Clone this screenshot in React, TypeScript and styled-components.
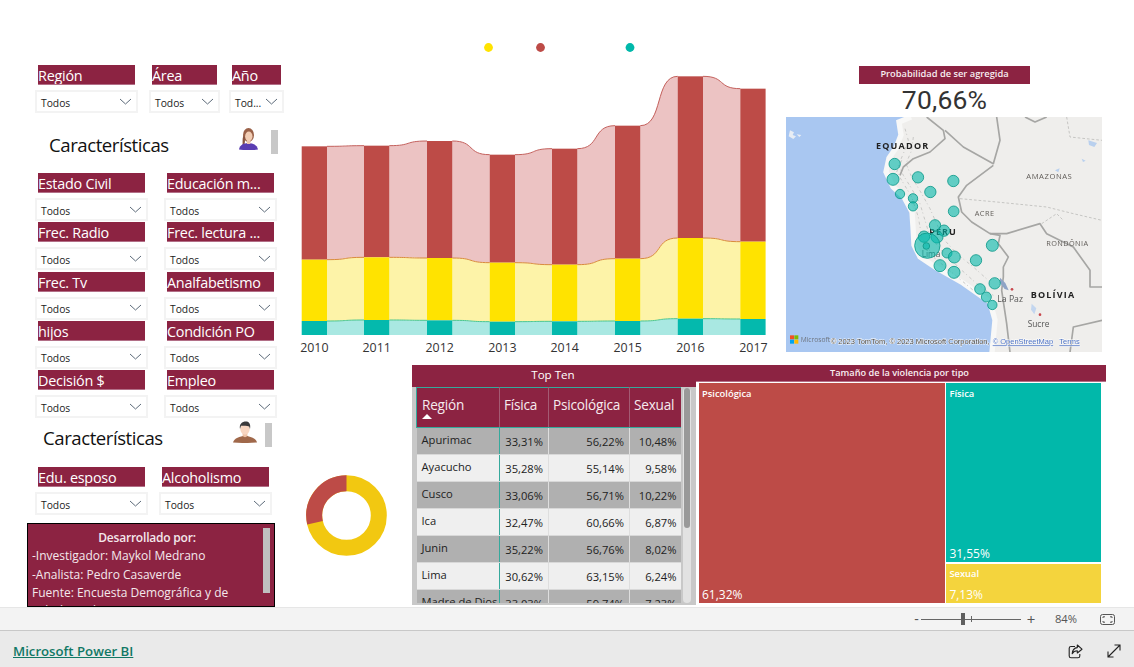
import React from "react";
import styled, { createGlobalStyle } from "styled-components";

const UI = `"Open Sans", "Noto Sans", sans-serif`;
const WINE = "#8c2342";

const Global = createGlobalStyle`
  html, body { margin: 0; padding: 0; background: #fff; }
  body { font-family: ${UI}; overflow: hidden; }
  * { box-sizing: border-box; }
`;

const Page = styled.div`
  width: 1134px;
  height: 667px;
  display: flex;
  flex-direction: column;
  overflow: hidden;
`;
const Canvas = styled.main`
  height: 607px;
  display: flex;
  overflow: hidden;
  background: #fff;
`;

/* ---------- left panel ---------- */
const LeftPanel = styled.aside`
  width: 298px;
  flex: none;
  padding: 65px 0 0 35px;
`;
const SlicerRow = styled.div<{ $gap: number; $ml?: number }>`
  display: flex;
  gap: ${(p) => p.$gap}px;
  margin-left: ${(p) => p.$ml ?? 0}px;
`;
const SlicerGrid = styled.div`
  display: grid;
  grid-template-columns: 113px 113px;
  column-gap: 16px;
  row-gap: 1.25px;
`;
const SlicerBox = styled.div<{ $w: number }>`
  width: ${(p) => p.$w}px;
`;
const SlicerTitle = styled.div`
  height: 20px;
  margin: 0 3px 5px;
  background: ${WINE};
  border-bottom: 1px solid #b26f87;
  color: #fff;
  font-size: 14.4px;
  line-height: 21px;
  letter-spacing: -0.25px;
  white-space: nowrap;
  overflow: hidden;
`;
const Dropdown = styled.div`
  height: 23px;
  border: 2px solid #f3f3f3;
  background: #fff;
  display: flex;
  align-items: center;
  justify-content: space-between;
  padding: 2px 4px 0 4px;
  font-size: 10.3px;
  color: #222;
`;
const ChevronSvg = styled.svg`
  margin-top: -3px;
  flex: none;
`;
const Chevron = () => (
  <ChevronSvg width="13" height="7" viewBox="0 0 13 7">
    <polyline points="1,1 6.5,6 12,1" fill="none" stroke="#5d6b7a" strokeWidth="1" />
  </ChevronSvg>
);
function Slicer({ title, w }: { title: string; w: number }) {
  const short = w < 60 ? "Tod..." : "Todos";
  return (
    <SlicerBox $w={w}>
      <SlicerTitle>{title}</SlicerTitle>
      <Dropdown>
        <span>{short}</span>
        <Chevron />
      </Dropdown>
    </SlicerBox>
  );
}
const SectionHead = styled.div<{ $h: number; $indent: number; $avatarW: number; $top: number }>`
  height: ${(p) => p.$h}px;
  width: ${(p) => p.$avatarW}px;
  margin-left: ${(p) => p.$indent}px;
  padding-top: ${(p) => p.$top}px;
  display: flex;
  align-items: flex-start;
`;
const SectionText = styled.h2`
  margin: 0;
  flex: 1;
  font-size: 18.6px;
  line-height: 26px;
  font-weight: 400;
  letter-spacing: -0.45px;
  color: #111;
  white-space: nowrap;
`;
const AvatarSlot = styled.div<{ $mt: number; $mr: number }>`
  margin-top: ${(p) => p.$mt}px;
  margin-right: ${(p) => p.$mr}px;
  line-height: 0;
`;
const MiniScroll = styled.div<{ $mt: number }>`
  width: 7px;
  height: 24px;
  background: #c8c8c8;
  margin-top: ${(p) => p.$mt}px;
`;
const Woman = () => (
  <svg width="20" height="22" viewBox="0 0 20 22">
    <ellipse cx="10.5" cy="7" rx="5.5" ry="7" fill="#9a6148" />
    <path d="M5.2 8 C4 12 5 15 4.4 18 L6.4 18 C7 15 7 12 7 9 Z" fill="#8a5540" />
    <path d="M1 21.5 C1.5 17 6 15 10.5 15 C15 15 19 17 20 21.5 C14 22.4 6 22.4 1 21.5 Z" fill="#5a3db2" />
    <rect x="8.8" y="11" width="3.6" height="5" fill="#eec5aa" />
    <ellipse cx="10.8" cy="8.4" rx="3.7" ry="4.8" fill="#f2cdb4" />
  </svg>
);
const Man = () => (
  <svg width="24" height="22" viewBox="0 0 24 22">
    <path d="M0 21.5 C1 17 7 15.5 12 14.5 C17 15.5 23 17 24 21.5 C16 22.2 8 22.2 0 21.5 Z" fill="#a0684a" />
    <path d="M9.6 10 H14.4 V15 C13 16.5 11 16.5 9.6 15 Z" fill="#eec2a6" />
    <ellipse cx="12" cy="8" rx="4.7" ry="5.8" fill="#f8d6c1" />
    <path d="M7 8 C6 3 9 0.5 13 0.5 C16 0.5 18 3 17 8 L16.2 5.5 C14 4.6 11 5 8 4.8 Z" fill="#3a3a3c" />
  </svg>
);
const DevBox = styled.section`
  width: 248px;
  height: 84px;
  margin: 8px 0 0 -8px;
  position: relative;
  overflow: hidden;
  background: ${WINE};
  border: 1px solid #000;
  padding: 5px 18px 0 4px;
  color: #f4e8ec;
  font-size: 12px;
  line-height: 18.3px;
`;
const DevTitle = styled.div`
  text-align: center;
  font-weight: 600;
  margin-left: 6px;
  letter-spacing: -0.2px;
`;
const DevLine = styled.div`
  white-space: nowrap;
`;
const DevScroll = styled.div`
  position: absolute;
  right: 4px;
  top: 4px;
  width: 7px;
  height: 65px;
  background: #c0c0c0;
`;

/* ---------- center / right ---------- */
const RightArea = styled.div`
  flex: 1;
  display: flex;
  flex-direction: column;
`;
const TopRow = styled.div`
  height: 365px;
  display: flex;
  gap: 6px;
  flex: none;
`;
const ChartSvg = styled.svg`
  display: block;
  flex: none;
`;
const MapCol = styled.section`
  width: 316px;
  padding-top: 66px;
  display: flex;
  flex-direction: column;
  align-items: center;
`;
const MapTitle = styled.div`
  width: 171px;
  height: 18px;
  background: ${WINE};
  color: #f8eef1;
  font-size: 9.3px;
  font-weight: 600;
  line-height: 16px;
  text-align: center;
  margin-left: 1px;
`;
const Kpi = styled.div`
  height: 33px;
  font-family: "Roboto", sans-serif;
  font-size: 26.5px;
  line-height: 32px;
  letter-spacing: 0.2px;
  color: #333;
  margin-left: 1px;
`;
const MapSvg = styled.svg`
  display: block;
  filter: blur(0.35px);
`;
const BottomRow = styled.div`
  flex: 1;
  display: flex;
`;
const DonutCol = styled.div`
  width: 114px;
  flex: none;
  padding: 110px 0 0 8px;
`;
const DonutSvg = styled.svg`
  display: block;
`;
const TablePanel = styled.section`
  width: 284px;
  height: 240px;
  flex: none;
  display: flex;
  flex-direction: column;
  background: #c8c8c8;
`;
const TableTitle = styled.div`
  height: 22px;
  flex: none;
  background: ${WINE};
  color: #fff;
  font-size: 11.6px;
  font-weight: 500;
  line-height: 20px;
  text-align: center;
  padding-right: 2px;
`;
const TableBody = styled.div`
  flex: 1;
  min-height: 0;
  display: flex;
  padding: 0 0 2px 4px;
  overflow: hidden;
`;
const TableClip = styled.div`
  width: 265px;
  flex: none;
  overflow: hidden;
`;
const Grid = styled.table`
  width: 265px;
  table-layout: fixed;
  border-collapse: collapse;
  font-size: 11.2px;
  color: #222;
`;
const Th = styled.th<{ $left?: boolean; $w: number }>`
  width: ${(p) => p.$w}px;
  height: 40px;
  background: ${WINE};
  color: #f6eaee;
  font-weight: 400;
  font-size: 13.6px;
  line-height: 18px;
  letter-spacing: -0.2px;
  padding: 8px 0 2px ${(p) => (p.$left ? 5 : 4)}px;
  text-align: left;
  vertical-align: top;
  border: 1px solid #a35b73;
  border-top: 1px solid #35a99c;
  border-bottom: 1px solid #35a99c;
  &:first-child { border-left: 1px solid #35a99c; }
  &:last-child { border-right: 1px solid #35a99c; }
`;
const SortUp = styled.div`
  width: 0;
  height: 0;
  border-left: 5px solid transparent;
  border-right: 5px solid transparent;
  border-bottom: 5px solid #fff;
`;
const Tr = styled.tr<{ $alt: boolean }>`
  height: 27px;
  background: ${(p) => (p.$alt ? "#efefef" : "#b0b0b0")};
`;
const Td = styled.td<{ $left?: boolean }>`
  padding: 0 5px ${(p) => (p.$left ? 3 : 0)}px 5px;
  text-align: ${(p) => (p.$left ? "left" : "right")};
  white-space: nowrap;
  overflow: hidden;
  border-bottom: 1px solid #d8d8d8;
  ${(p) => (p.$left ? "border-right: 1px solid #35a99c;" : "border-left: 1px solid #dedede;")}
`;
const ScrollTrack = styled.div`
  width: 8px;
  margin: 1px 0 0 1.5px;
  flex: none;
  background: #e2e2e2;
  border-radius: 4px;
  padding: 0 1px;
`;
const ScrollThumb = styled.div`
  height: 140px;
  background: #999;
  border-radius: 3px;
`;
const TreePanel = styled.section`
  width: 410px;
  flex: none;
  background: #fff;
`;
const TreeTitle = styled.div`
  height: 17px;
  background: ${WINE};
  color: #f8eef1;
  font-size: 9.2px;
  font-weight: 600;
  line-height: 15px;
  text-align: center;
  padding-right: 3px;
  border-bottom: 1px solid #b26f87;
`;
const TreeBody = styled.div`
  display: flex;
  gap: 1.8px;
  height: 221px;
  padding: 1px 5px 0 3px;
`;
const TreeCol = styled.div`
  flex: 1;
  display: flex;
  flex-direction: column;
  gap: 1.7px;
`;
const Tile = styled.div<{ $bg: string; $w?: number; $h?: number; $grow?: boolean }>`
  background: ${(p) => p.$bg};
  ${(p) => (p.$w ? `width: ${p.$w}px; flex: none;` : "")}
  ${(p) => (p.$h ? `height: ${p.$h}px; flex: none;` : "")}
  ${(p) => (p.$grow ? "flex: 1;" : "")}
  display: flex;
  flex-direction: column;
  justify-content: space-between;
  padding: 3.5px 3px 0;
  color: #fff;
`;
const TileName = styled.div`
  font-size: 9.4px;
  font-weight: 600;
  line-height: 13px;
`;
const TileValue = styled.div`
  font-size: 12px;
  line-height: 16px;
`;

/* ---------- bars ---------- */
const StatusBar = styled.div`
  height: 24px;
  flex: none;
  background: #f3f3f3;
  border-top: 1px solid #e6e6e6;
  border-bottom: 1px solid #c8c8c8;
  display: flex;
  align-items: center;
  justify-content: flex-end;
  padding-right: 19px;
  color: #555;
`;
const Zoomer = styled.span<{ $size?: number; $w?: number; $mr?: number }>`
  font-size: ${(p) => p.$size ?? 12}px;
  ${(p) => (p.$w ? `width: ${p.$w}px; text-align: center;` : "")}
  margin-right: ${(p) => p.$mr ?? 0}px;
  line-height: 1;
`;
const Slider = styled.div`
  position: relative;
  width: 100px;
  height: 1px;
  background: #666;
  margin-right: 5px;
`;
const SliderThumb = styled.div`
  position: absolute;
  left: 40px;
  top: -6px;
  width: 4px;
  height: 12px;
  background: #5f5f5f;
`;
const SliderTick = styled.div`
  position: absolute;
  left: 50px;
  top: -3px;
  width: 1px;
  height: 6px;
  background: #666;
`;
const Footer = styled.footer`
  flex: 1;
  background: #eaeaea;
  display: flex;
  align-items: center;
  padding: 4px 13px 0 13px;
`;
const BrandLink = styled.a`
  font-size: 13.2px;
  font-weight: 600;
  color: #117865;
  text-decoration: underline;
  flex: 1;
`;
const IconSlot = styled.div<{ $mr?: number }>`
  margin-right: ${(p) => p.$mr ?? 0}px;
  line-height: 0;
`;

/* ---------- chart data ---------- */
const years = [2010, 2011, 2012, 2013, 2014, 2015, 2016, 2017];
const barX = [3.7, 66, 129, 191.7, 254, 317, 379.7, 442.3];
const barW = 25.3;
const y0 = (z: number) => 30 + z / 3;
const redTop = [349, 347, 333, 374, 356, 287, 139, 176].map(y0);
const yelTop = [689, 682, 684, 698, 704, 686, 624, 635].map(y0);
const tealTop = [873, 870, 871, 875, 874, 873, 866, 867].map(y0);
const BASE = 335;

const curve = (x1: number, a: number, x2: number, b: number) => {
  const k = (x2 - x1) * 0.62;
  return `C${x1 + k} ${a} ${x2 - k} ${b} ${x2} ${b}`;
};
const curveBack = (x2: number, b: number, x1: number, a: number) => {
  const k = (x2 - x1) * 0.62;
  return `C${x2 - k} ${b} ${x1 + k} ${a} ${x1} ${a}`;
};

function Ribbons({ top, bot, fill, line }: { top: number[]; bot: number[] | null; fill: string; line: string }) {
  return (
    <>
      {years.slice(0, -1).map((_, i) => {
        const x1 = barX[i] + barW;
        const x2 = barX[i + 1];
        const upper = `M${x1} ${top[i]} ${curve(x1, top[i], x2, top[i + 1])}`;
        const lower = bot
          ? `L${x2} ${bot[i + 1]} ${curveBack(x2, bot[i + 1], x1, bot[i])} Z`
          : `L${x2} ${BASE} L${x1} ${BASE} Z`;
        return (
          <g key={i}>
            <path d={upper + " " + lower} fill={fill} />
            <path d={upper} fill="none" stroke={line} strokeWidth="1" />
          </g>
        );
      })}
    </>
  );
}

function Chart() {
  return (
    <ChartSvg width="482" height="365" viewBox="0 0 482 365">
      <circle cx="190.5" cy="47.5" r="4.4" fill="#ffe300" />
      <circle cx="242.5" cy="47.5" r="4.4" fill="#bd4b47" />
      <circle cx="332" cy="47.5" r="4.4" fill="#01b8aa" />
      <Ribbons top={redTop} bot={yelTop} fill="#ecc3c3" line="#c4615d" />
      <Ribbons top={yelTop} bot={tealTop} fill="#fdf3a8" line="#d98a3d" />
      <Ribbons top={tealTop} bot={null} fill="#a9e8e2" line="#4cc78f" />
      {years.map((y, i) => (
        <g key={y}>
          <rect x={barX[i]} y={redTop[i]} width={barW} height={yelTop[i] - redTop[i]} fill="#bd4b47" />
          <rect x={barX[i]} y={yelTop[i]} width={barW} height={tealTop[i] - yelTop[i]} fill="#ffe300" />
          <rect x={barX[i]} y={tealTop[i]} width={barW} height={BASE - tealTop[i]} fill="#04b9ad" />
          <text
            x={barX[i] + barW / 2 + (i === 7 ? 0.5 : 0)}
            y="352"
            textAnchor="middle"
            fontSize="12.4"
            fontFamily={UI}
            fill="#333"
          >
            {y}
          </text>
        </g>
      ))}
    </ChartSvg>
  );
}

const bubbles: [number, number, number][] = [
  [344, 311, 17], [339, 357, 18], [414, 351, 17], [520, 362, 17], [451, 395, 17],
  [360, 401, 14], [399, 414, 14], [399, 438, 14], [521, 453, 16], [465, 495, 17],
  [492, 511, 17], [432, 529, 17], [471, 530, 18], [442, 556, 38], [439, 557, 10],
  [637, 555, 18], [501, 578, 15], [523, 590, 18], [588, 600, 17], [480, 616, 18],
  [522, 636, 18], [644, 669, 17], [600, 686, 16], [619, 710, 15], [637, 734, 14],
];
const coast = "393,170 357,185 363,224 348,263 327,293 318,335 339,380 372,410 396,455 399,500 402,554 420,590 465,620 549,668 630,725 645,779 636,876";
const borders = [
  "440,170 490,210 495,235 450,275 400,295 370,320 360,345",
  "495,210 550,260 640,310 660,240 650,170",
  "640,315 560,375 535,410 545,455 575,485 630,520 660,525 655,550 685,590 670,620 670,650 665,690 680,790 690,876",
  "630,520 680,520 780,490 800,520 880,560 930,630 930,680 966,680",
  "870,876 880,800 966,780",
  "735,170 765,185 800,170",
];
const dashed = [
  "540,415 650,425 800,440 880,460 966,480",
  "860,170 870,230 966,240",
  "785,490 830,460 850,480",
];
const texture = [
  "375,205 385,240 370,280 355,315 370,345 395,385 420,430 435,480 450,530 490,575 540,625 590,670 640,705",
  "400,230 395,270 378,310 395,350 425,400 450,445 470,490 490,535 530,580 580,620 625,660",
  "365,300 350,335 365,360 395,410 415,470 425,530 460,590 520,640 580,690",
];

function PeruMap() {
  const mapText = { fontFamily: UI, textAnchor: "start" as const };
  const credit = {
    fontSize: 22.5,
    stroke: "#fff",
    strokeWidth: 2.4,
    paintOrder: "stroke",
    fontFamily: `"Liberation Sans", sans-serif`,
  };
  return (
    <MapSvg width="316" height="235" viewBox="18 170 948 705">
      <rect x="18" y="170" width="948" height="705" fill="#a9c7f1" />
      <polygon points={`${coast} 966,876 966,170`} fill="#efeeec" />
      <polyline points={coast} fill="none" stroke="#f8f8f7" strokeWidth="16" />
      {texture.map((t) => (
        <polyline key={t} points={t} fill="none" stroke="#c9c9c7" strokeWidth="3" strokeDasharray="9 7 3 10" />
      ))}
      {borders.map((b) => (
        <polyline key={b} points={b} fill="none" stroke="#a6a6a4" strokeWidth="5" strokeLinejoin="round" />
      ))}
      {dashed.map((b) => (
        <polyline key={b} points={b} fill="none" stroke="#bdbdbb" strokeWidth="2.5" strokeDasharray="8 6" />
      ))}
      <path d="M30 210 l12 6 -4 8 10 4 -8 8 -14 -8 Z M50 222 l14 2 -6 6 Z" fill="#e8edf4" />
      <path d="M660 652 l16 16 10 22 -12 -4 -14 -18 Z" fill="#8fa3c6" />
      <path d="M925 240 l26 8 -8 12 -16 -6 Z M905 295 l12 6 -8 4 Z M825 330 l14 -6 -4 12 Z" fill="#b9d0ee" />
      <path d="M755 730 l14 14 -6 18 -10 -14 Z" fill="#c3d6ef" />
      <circle cx="696" cy="687" r="4" fill="#c8474d" />
      <circle cx="780" cy="763" r="4" fill="#c8474d" />
      <text x="288" y="265" fontSize="27" fontWeight="700" letterSpacing="3.6" fill="#222" {...mapText}>EQUADOR</text>
      <text x="739" y="356" fontSize="23" letterSpacing="1.6" fill="#605c58" {...mapText}>AMAZONAS</text>
      <text x="584" y="467" fontSize="22" letterSpacing="1.5" fill="#605c58" {...mapText}>ACRE</text>
      <text x="448" y="523" fontSize="27" fontWeight="700" letterSpacing="3" fill="#222" {...mapText}>PERU</text>
      <text x="799" y="557" fontSize="22" letterSpacing="1.2" fill="#605c58" {...mapText}>RONDÔNIA</text>
      <text x="752" y="714" fontSize="27" fontWeight="700" letterSpacing="3.6" fill="#222" {...mapText}>BOLÍVIA</text>
      <text x="652" y="725" fontSize="26" fill="#555" {...mapText}>La Paz</text>
      <text x="425" y="591" fontSize="25" fill="#555" {...mapText}>Lima</text>
      <text x="743" y="800" fontSize="25" fill="#555" {...mapText}>Sucre</text>
      {bubbles.map(([x, y, r], i) => (
        <circle key={i} cx={x} cy={y} r={r} fill="#01b8aa" fillOpacity="0.6" stroke="#109a8b" strokeOpacity="0.85" strokeWidth="3" />
      ))}
      <rect x="30" y="825" width="12" height="12" fill="#f25022" />
      <rect x="43" y="825" width="12" height="12" fill="#7fba00" />
      <rect x="30" y="838" width="12" height="12" fill="#00a4ef" />
      <rect x="43" y="838" width="12" height="12" fill="#ffb900" />
      <text x="62" y="844" fontSize="20" fill="#6f7680" fontFamily={UI}>Microsoft</text>
      <text x="152" y="852" fill="#444" {...credit}>© 2023 TomTom, © 2023 Microsoft Corporation,</text>
      <text x="638" y="852" fill="#4a6fc0" textDecoration="underline" {...credit}>© OpenStreetMap</text>
      <text x="838" y="852" fill="#4a6fc0" textDecoration="underline" {...credit}>Terms</text>
    </MapSvg>
  );
}

function Donut() {
  const cx = 40.5, cy = 40.5, R = 32.3;
  const ang = (103 * Math.PI) / 180;
  const ex = cx - R * Math.sin(ang);
  const ey = cy - R * Math.cos(ang);
  return (
    <DonutSvg width="81" height="81" viewBox="0 0 81 81">
      <circle cx={cx} cy={cy} r={R} fill="none" stroke="#f2c811" strokeWidth="16" />
      <path d={`M${cx} ${cy - R} A${R} ${R} 0 0 0 ${ex} ${ey}`} fill="none" stroke="#bd4b47" strokeWidth="16" />
    </DonutSvg>
  );
}

const rows: [string, string, string, string][] = [
  ["Apurimac", "33,31%", "56,22%", "10,48%"],
  ["Ayacucho", "35,28%", "55,14%", "9,58%"],
  ["Cusco", "33,06%", "56,71%", "10,22%"],
  ["Ica", "32,47%", "60,66%", "6,87%"],
  ["Junin", "35,22%", "56,76%", "8,02%"],
  ["Lima", "30,62%", "63,15%", "6,24%"],
  ["Madre de Dios", "33,03%", "59,74%", "7,23%"],
];

export default function App() {
  return (
    <Page>
      <Global />
      <Canvas>
        <LeftPanel>
          <SlicerRow $gap={0}>
            <Slicer title="Región" w={103} />
            <SlicerRow $gap={9} $ml={11}>
              <Slicer title="Área" w={71} />
              <Slicer title="Año" w={55} />
            </SlicerRow>
          </SlicerRow>
          <SectionHead $h={60} $indent={14} $avatarW={229} $top={19}>
            <SectionText>Características</SectionText>
            <AvatarSlot $mt={-4} $mr={13}><Woman /></AvatarSlot>
            <MiniScroll $mt={-2} />
          </SectionHead>
          <SlicerGrid>
            {["Estado Civil", "Educación m...", "Frec. Radio", "Frec. lectura ...", "Frec. Tv", "Analfabetismo", "hijos", "Condición PO", "Decisión $", "Empleo"].map((t) => (
              <Slicer key={t} title={t} w={113} />
            ))}
          </SlicerGrid>
          <SectionHead $h={49} $indent={8} $avatarW={229} $top={7}>
            <SectionText>Características</SectionText>
            <AvatarSlot $mt={-4} $mr={8}><Man /></AvatarSlot>
            <MiniScroll $mt={-2} />
          </SectionHead>
          <SlicerRow $gap={11}>
            <Slicer title="Edu. esposo" w={113} />
            <Slicer title="Alcoholismo" w={113} />
          </SlicerRow>
          <DevBox>
            <DevTitle>Desarrollado por:</DevTitle>
            <DevLine>-Investigador: Maykol Medrano</DevLine>
            <DevLine>-Analista: Pedro Casaverde</DevLine>
            <DevLine>Fuente: Encuesta Demográfica y de</DevLine>
            <DevLine>Salud Familiar</DevLine>
            <DevScroll />
          </DevBox>
        </LeftPanel>
        <RightArea>
          <TopRow>
            <Chart />
            <MapCol>
              <MapTitle>Probabilidad de ser agregida</MapTitle>
              <Kpi>70,66%</Kpi>
              <PeruMap />
            </MapCol>
          </TopRow>
          <BottomRow>
            <DonutCol><Donut /></DonutCol>
            <TablePanel>
              <TableTitle>Top Ten</TableTitle>
              <TableBody>
                <TableClip>
                  <Grid>
                    <thead>
                      <tr>
                        <Th $left $w={83}>Región<SortUp /></Th>
                        <Th $w={49}>Física</Th>
                        <Th $w={81}>Psicológica</Th>
                        <Th $w={52}>Sexual</Th>
                      </tr>
                    </thead>
                    <tbody>
                      {rows.map((r, i) => (
                        <Tr key={r[0]} $alt={i % 2 === 1}>
                          <Td $left>{r[0]}</Td>
                          <Td>{r[1]}</Td>
                          <Td>{r[2]}</Td>
                          <Td>{r[3]}</Td>
                        </Tr>
                      ))}
                    </tbody>
                  </Grid>
                </TableClip>
                <ScrollTrack><ScrollThumb /></ScrollTrack>
              </TableBody>
            </TablePanel>
            <TreePanel>
              <TreeTitle>Tamaño de la violencia por tipo</TreeTitle>
              <TreeBody>
                <Tile $bg="#bd4b47" $w={245.6}>
                  <TileName>Psicológica</TileName>
                  <TileValue>61,32%</TileValue>
                </Tile>
                <TreeCol>
                  <Tile $bg="#01b8aa" $h={179}>
                    <TileName>Física</TileName>
                    <TileValue>31,55%</TileValue>
                  </Tile>
                  <Tile $bg="#f4d43d" $grow>
                    <TileName>Sexual</TileName>
                    <TileValue>7,13%</TileValue>
                  </Tile>
                </TreeCol>
              </TreeBody>
            </TreePanel>
          </BottomRow>
        </RightArea>
      </Canvas>
      <StatusBar>
        <Zoomer $size={14} $w={9} $mr={0}>-</Zoomer>
        <Slider>
          <SliderThumb />
          <SliderTick />
        </Slider>
        <Zoomer $size={15} $w={10} $mr={19}>+</Zoomer>
        <Zoomer $size={11.2} $mr={23}>84%</Zoomer>
        <svg width="15" height="11" viewBox="0 0 15 11">
          <rect x="0.5" y="0.5" width="14" height="10" rx="2" fill="none" stroke="#555" />
          <path d="M3 4 V2.8 H5 M10 2.8 H12 V4 M3 7 V8.2 H5 M10 8.2 H12 V7" fill="none" stroke="#555" />
        </svg>
      </StatusBar>
      <Footer>
        <BrandLink href="#">Microsoft Power BI</BrandLink>
        <IconSlot $mr={24}>
          <svg width="15" height="15" viewBox="0 0 15 15">
            <path d="M7 2.5 H3 A1.8 1.8 0 0 0 1.2 4.3 V12 A1.8 1.8 0 0 0 3 13.8 H10 A1.8 1.8 0 0 0 11.8 12 V10" fill="none" stroke="#222" strokeWidth="1.1" />
            <path d="M9.3 1 L14 5.2 L9.3 9 V6.8 C7 6.8 5.3 7.6 4.2 9.8 C4.4 6.4 6.2 3.9 9.3 3.6 Z" fill="none" stroke="#222" strokeWidth="1.1" strokeLinejoin="round" />
          </svg>
        </IconSlot>
        <IconSlot>
          <svg width="14" height="14" viewBox="0 0 14 14">
            <path d="M1 13 L13 1 M7.5 1 H13 V6.5 M1 7.5 V13 H6.5" fill="none" stroke="#222" strokeWidth="1.1" />
          </svg>
        </IconSlot>
      </Footer>
    </Page>
  );
}
